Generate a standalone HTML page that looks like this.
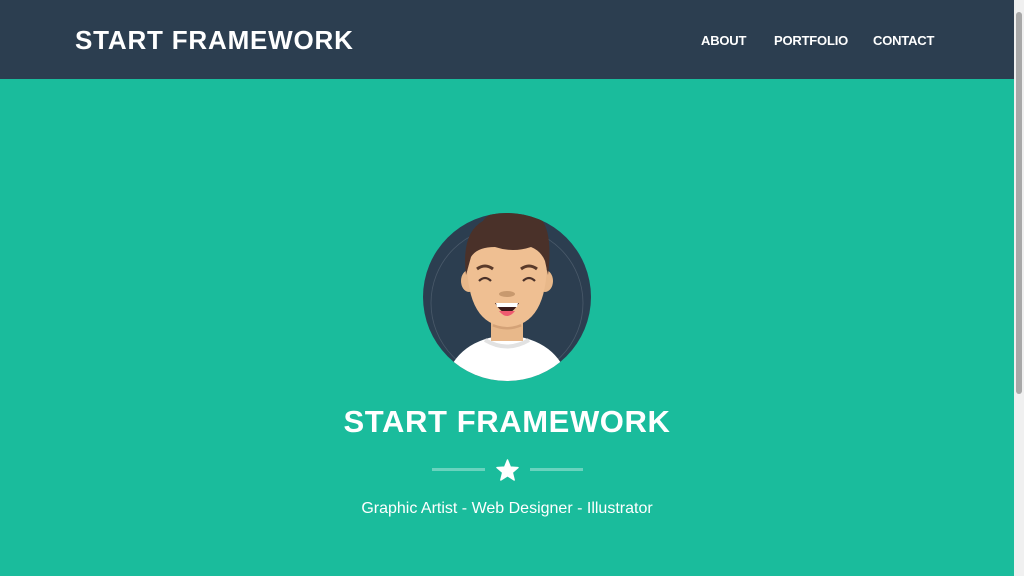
<!DOCTYPE html>
<html><head><meta charset="utf-8"><style>
html,body{margin:0;padding:0;}
body{width:1024px;height:576px;overflow:hidden;background:#1abc9c;font-family:"Liberation Sans",sans-serif;position:relative;}
header{position:absolute;left:0;top:0;width:1014px;height:79px;background:#2c3e50;}
.brand{position:absolute;left:75px;top:25px;color:#fff;font-weight:bold;font-size:26px;letter-spacing:0.8px;}
nav a{position:absolute;top:33px;color:#fff;font-weight:bold;font-size:13px;letter-spacing:-0.2px;text-decoration:none;}
h1{position:absolute;left:0;width:1014px;top:404px;margin:0;text-align:center;color:#fff;font-size:31px;letter-spacing:0.6px;}
.line{position:absolute;top:468px;height:3px;width:53px;background:rgba(255,255,255,0.35);}
p{position:absolute;left:0;width:1014px;top:500px;margin:0;text-align:center;color:#fff;font-size:16px;}
.sb{position:absolute;right:0;top:0;width:10px;height:576px;background:#f0f0f0;}
.th{position:absolute;right:2px;top:12px;width:6px;height:382px;background:#a8a8a8;border-radius:3px;}
</style></head><body>
<header>
<div class="brand">START FRAMEWORK</div>
<nav><a style="left:701px">ABOUT</a><a style="left:774px">PORTFOLIO</a><a style="left:873px">CONTACT</a></nav>
</header>
<svg style="position:absolute;left:423px;top:213px" width="168" height="168" viewBox="0 0 168 168">
<defs><clipPath id="c"><circle cx="84" cy="84" r="84"/></clipPath></defs>
<g clip-path="url(#c)">
<rect width="168" height="168" fill="#2c3e50"/>
<circle cx="84" cy="90" r="76" fill="none" stroke="#4a5a6a" stroke-width="0.8"/>
<path d="M22 168 Q34 126 84 122 Q134 126 146 168Z" fill="#fff"/>
<path d="M62 127 Q84 140 106 127" fill="none" stroke="#e2e2e2" stroke-width="4"/>
<rect x="68" y="98" width="32" height="30" fill="#e8b88a"/>
<path d="M70 112 Q84 118 98 112" fill="none" stroke="#d4a277" stroke-width="3"/>
<ellipse cx="46" cy="68" rx="8" ry="11" fill="#e8b88a"/>
<ellipse cx="122" cy="68" rx="8" ry="11" fill="#e8b88a"/>
<path d="M44 44 Q44 20 84 20 Q124 20 124 44 Q125 112 84 114 Q43 112 44 44Z" fill="#efbf92"/>
<path d="M43 62 Q38 20 60 8 Q66 -2 84 0 Q110 -2 118 6 Q130 20 125 62 L122 48 Q118 38 108 34 Q90 40 72 34 Q54 34 48 44Z" fill="#4a3129"/>
<path d="M54 56 Q62 50 70 56 M98 56 Q106 50 114 56" fill="none" stroke="#5a3a2a" stroke-width="3"/>
<path d="M56 68 Q62 62 68 68 M100 68 Q106 62 112 68" fill="none" stroke="#4a3129" stroke-width="2.2"/>
<ellipse cx="84" cy="81" rx="8" ry="3" fill="#c8996e"/>
<path d="M72 90 Q84 110 96 90Z" fill="#3a1a1a"/>
<path d="M76 98 Q84 108 92 98Z" fill="#ee5a6f"/>
<path d="M73 90 L95 90 L94 94 L74 94Z" fill="#fff"/>
</g></svg>
<h1>START FRAMEWORK</h1>
<div class="line" style="left:432px"></div>
<div class="line" style="left:530px"></div>
<svg style="position:absolute;left:496px;top:459px" width="23" height="22" viewBox="0 0 24 23"><path d="M12 1 L15 8.5 L23 9 L17 14 L19 22 L12 17.5 L5 22 L7 14 L1 9 L9 8.5Z" fill="#fff" stroke="#fff" stroke-width="1.5" stroke-linejoin="round"/></svg>
<p>Graphic Artist - Web Designer - Illustrator</p>
<div class="sb"><div class="th"></div></div>
</body></html>
